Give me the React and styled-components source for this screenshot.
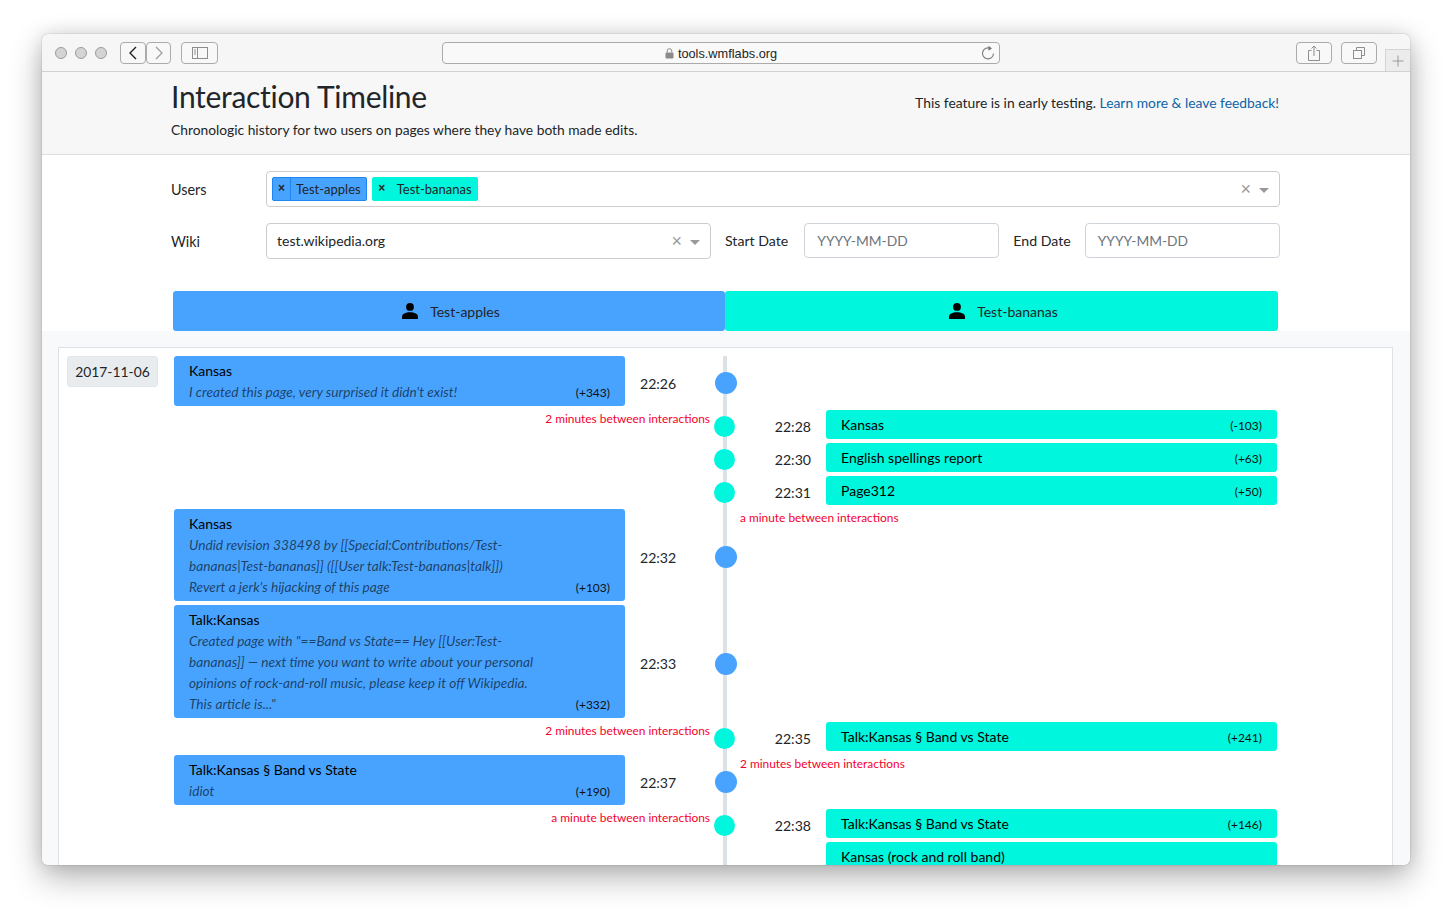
import React from 'react';
import styled, { createGlobalStyle } from 'styled-components';

const BLUE = '#48a3ff';
const TEAL = '#00f6dd';

const Global = createGlobalStyle`
  html, body { margin: 0; padding: 0; background: #fff; height: 100%; overflow: hidden; }
  body { font-family: Lato, "Open Sans", sans-serif; font-size: 14px; color: #212529; }
`;

const Stage = styled.div`
  padding: 34px 41px 0 42px;
  height: 915px;
  box-sizing: border-box;
`;
const Win = styled.div`
  width: 1368px;
  height: 831px;
  border-radius: 6px;
  overflow: hidden;
  background: #f8f9fa;
  box-shadow: 0 0 1px rgba(0,0,0,.55), 0 12px 32px rgba(0,0,0,.3), 0 0 18px rgba(0,0,0,.1);
  display: flex;
  flex-direction: column;
`;
const Toolbar = styled.div`
  height: 37px;
  flex: none;
  box-sizing: content-box;
  background: #f6f6f6;
  border-bottom: 1px solid #d1d1d1;
  display: flex;
  align-items: flex-start;
  padding-left: 13px;
`;
const Lights = styled.div`
  display: flex;
  gap: 8px;
  margin-top: 13px;
  margin-right: 13px;
`;
const Light = styled.span`
  width: 12px;
  height: 12px;
  box-sizing: border-box;
  border-radius: 50%;
  background: #d4d4d4;
  border: 1px solid #9c9c9c;
`;
const ToolBtn = styled.div`
  width: ${p => p.$w}px;
  height: 22px;
  box-sizing: border-box;
  border: 1px solid #ababab;
  border-radius: 4px;
  background: #f8f8f8;
  display: flex;
  align-items: center;
  justify-content: center;
  margin-top: 8px;
  margin-left: ${p => p.$ml || 0}px;
  flex: none;
`;
const UrlBar = styled.div`
  width: 558px;
  height: 22px;
  box-sizing: border-box;
  margin-top: 8px;
  margin-left: 224px;
  border: 1px solid #ababab;
  border-radius: 4px;
  background: #f9f9f9;
  display: flex;
  align-items: center;
  justify-content: center;
  gap: 4px;
  position: relative;
  flex: none;
  font-family: "Liberation Sans", Arial, sans-serif;
  font-size: 12.75px;
  color: #1f1f1f;
  padding-top: 1px;
`;
const Reload = styled.span`
  position: absolute;
  right: 3px;
  top: 2px;
  display: flex;
`;
const PlusTab = styled.div`
  width: 25px;
  height: 22px;
  margin-left: 8px;
  margin-top: 15px;
  box-sizing: border-box;
  background: #ececec;
  border-left: 1px solid #d4d4d4;
  border-top: 1px solid #d4d4d4;
  display: flex;
  align-items: center;
  justify-content: center;
  flex: none;
`;

const Header = styled.header`
  height: 82px;
  flex: none;
  background: #f7f7f7;
  border-bottom: 1px solid #dfdfdf;
  padding: 0 131px 0 129px;
  display: flex;
  justify-content: space-between;
`;
const Title = styled.h1`
  margin: 4px 0 0;
  font-size: 30px;
  letter-spacing: -0.3px;
  line-height: 40px;
  font-weight: 400;
  color: #212529;
`;
const Sub = styled.p`
  margin: 3px 0 0;
  font-size: 13.8px;
  line-height: 22px;
`;
const Notice = styled.div`
  margin-top: 20px;
  font-size: 13.85px;
  line-height: 22px;
`;
const Link = styled.a`
  color: #0e63a8;
`;

const Form = styled.section`
  background: #fff;
  flex: none;
  height: 176px;
  padding: 16px 130px 0 129px;
  box-sizing: border-box;
`;
const FormRow = styled.div`
  display: flex;
  align-items: flex-start;
  margin-bottom: 16px;
`;
const FieldLabel = styled.label`
  width: 95px;
  height: 36px;
  flex: none;
  font-size: 14.4px;
  line-height: 38px;
`;
const InlineLabel = styled.label`
  flex: none;
  font-size: 14.15px;
  line-height: 36px;
  margin-left: ${p => p.$ml}px;
  margin-right: ${p => p.$mr}px;
`;
const Select = styled.div`
  box-sizing: border-box;
  height: 36px;
  width: ${p => p.$w}px;
  flex: none;
  border: 1px solid #cccccc;
  border-radius: 4px;
  background: #fff;
  display: flex;
  align-items: center;
  padding-left: ${p => p.$pl}px;
`;
const Grow = styled.div`
  flex: 1;
  display: flex;
  align-items: center;
  gap: 5px;
  font-size: 14px;
  line-height: 20px;
  padding-bottom: ${p => (p.$lift ? 1 : 0)}px;
`;
const Clear = styled.span`
  color: #999;
  font-size: 18px;
  line-height: 1;
  margin-right: 8px;
  font-family: "Liberation Sans", Arial, sans-serif;
`;
const Caret = styled.span`
  width: 0;
  height: 0;
  border-left: 5px solid transparent;
  border-right: 5px solid transparent;
  border-top: 5px solid #999;
  margin-right: 10px;
  margin-top: 2px;
`;
const Tag = styled.div`
  display: flex;
  height: 24px;
  box-sizing: border-box;
  background: ${p => p.$bg};
  border: 1px solid ${p => p.$line};
  border-radius: 2px;
  font-size: 13px;
  line-height: 22px;
  color: #212529;
`;
const TagX = styled.span`
  width: ${p => p.$w}px;
  box-sizing: border-box;
  text-align: center;
  border-right: 1px solid ${p => p.$line};
  font-family: "Liberation Sans", Arial, sans-serif;
  font-size: 12px;
  font-weight: 700;
  line-height: 20px;
`;
const TagText = styled.span`
  padding: 0 5px;
`;
const DateInput = styled.div`
  box-sizing: border-box;
  width: ${p => p.$w}px;
  flex: none;
  height: 35px;
  border: 1px solid #ced4da;
  border-radius: 4px;
  padding-left: 12px;
  font-size: 13.8px;
  line-height: 33px;
  color: #6c757d;
`;
const Bars = styled.div`
  display: flex;
  margin: 32px 2px 0 2px;
`;
const UserBar = styled.div`
  height: 40px;
  width: ${p => p.$w}px;
  box-sizing: border-box;
  padding-left: 4px;
  background: ${p => p.$bg};
  border-radius: 3px;
  display: flex;
  align-items: center;
  justify-content: center;
  gap: 12px;
  font-size: 14px;
  color: #212529;
`;

const Main = styled.main`
  flex: 1;
  padding: 16px 17px 0 16px;
  min-height: 0;
  background: #f8f9fa;
`;
const Card = styled.div`
  box-sizing: border-box;
  height: 100%;
  min-height: 600px;
  background: #fff;
  border: 1px solid #dee2e6;
  border-bottom: none;
  display: flex;
  align-items: flex-start;
  padding: 8px 0 0 8px;
  overflow: hidden;
`;
const DateBadge = styled.div`
  box-sizing: border-box;
  width: 91px;
  height: 31px;
  flex: none;
  background: #e9ecef;
  border: 1px solid #e3e6ea;
  border-radius: 3px;
  text-align: center;
  font-size: 13.85px;
  line-height: 29px;
  margin-right: 16px;
`;
const Timeline = styled.div`
  position: relative;
  width: 1103px;
  flex: none;
  display: flex;
  flex-direction: column;
  gap: 4px;
  &::before {
    content: '';
    position: absolute;
    left: 549px;
    top: 0;
    bottom: 0;
    width: 4px;
    background: #dce1e6;
  }
`;
const Row = styled.div`
  position: relative;
  display: grid;
  grid-template-columns: 540px 23px 540px;
`;
const Side = styled.div`
  display: flex;
  align-items: center;
  gap: 15px;
  justify-content: ${p => (p.$right ? 'flex-end' : 'flex-start')};
`;
const Gap = styled.div`
  align-self: flex-start;
  width: 100%;
  box-sizing: border-box;
  font-size: 11.9px;
  line-height: 18px;
  color: #f5002d;
  text-align: ${p => (p.$right ? 'left' : 'right')};
  padding: ${p => (p.$right ? '0 0 0 3px' : '0 4px 0 0')};
`;
const Time = styled.div`
  width: ${p => (p.$right ? 'auto' : '60px')};
  font-size: 14.1px;
  line-height: 21px;
  padding-top: 4px;
  color: #212529;
`;
const DotCell = styled.div`
  display: flex;
  align-items: center;
  padding-top: 4px;
  box-sizing: border-box;
`;
const Dot = styled.span`
  display: block;
  flex: none;
  width: ${p => (p.$blue ? 22 : 21)}px;
  height: ${p => (p.$blue ? 22 : 21)}px;
  margin-left: ${p => (p.$blue ? 1 : 0)}px;
  border-radius: 50%;
  background: ${p => (p.$blue ? BLUE : TEAL)};
`;
const Entry = styled.div`
  width: 451px;
  box-sizing: border-box;
  flex: none;
  background: ${p => (p.$blue ? BLUE : TEAL)};
  border-radius: 3px;
  padding: 4px 15px;
  color: #000;
`;
const Line = styled.div`
  display: flex;
  justify-content: space-between;
  align-items: baseline;
  height: 21px;
  line-height: 21px;
  font-size: 14px;
  white-space: nowrap;
`;
const Summary = styled.span`
  font-style: italic;
  font-size: 13.7px;
  color: rgba(0,0,0,.62);
`;
const Delta = styled.span`
  font-size: 12px;
  line-height: 16px;
  color: #111;
`;

const Person = () => (
  <svg width="16" height="16" viewBox="0 0 16 16" fill="#000">
    <circle cx="8" cy="3.9" r="3.9" />
    <path d="M0 16v-2.2C0 11 3.6 9.3 8 9.3s8 1.7 8 4.5V16z" />
  </svg>
);

const Glyph = ({ children, w = 16, h = 16, c = '#8e8e8e' }) => (
  <svg width={w} height={h} viewBox={`0 0 ${w} ${h}`} fill="none" stroke={c} strokeWidth="1">
    {children}
  </svg>
);

const rows = [
  { side: 'l', time: '22:26', name: 'Kansas', summary: ["I created this page, very surprised it didn't exist!"], delta: '(+343)' },
  { side: 'r', time: '22:28', name: 'Kansas', delta: '(-103)', gap: '2 minutes between interactions' },
  { side: 'r', time: '22:30', name: 'English spellings report', delta: '(+63)' },
  { side: 'r', time: '22:31', name: 'Page312', delta: '(+50)' },
  { side: 'l', time: '22:32', name: 'Kansas', gap: 'a minute between interactions', delta: '(+103)', summary: [
    'Undid revision 338498 by [[Special:Contributions/Test-',
    'bananas|Test-bananas]] ([[User talk:Test-bananas|talk]])',
    "Revert a jerk's hijacking of this page",
  ] },
  { side: 'l', time: '22:33', name: 'Talk:Kansas', delta: '(+332)', summary: [
    'Created page with "==Band vs State== Hey [[User:Test-',
    'bananas]] \u2014 next time you want to write about your personal',
    'opinions of rock-and-roll music, please keep it off Wikipedia.',
    'This article is..."',
  ] },
  { side: 'r', time: '22:35', name: 'Talk:Kansas \u00a7 Band vs State', delta: '(+241)', gap: '2 minutes between interactions' },
  { side: 'l', time: '22:37', name: 'Talk:Kansas \u00a7 Band vs State', delta: '(+190)', summary: ['idiot'], gap: '2 minutes between interactions' },
  { side: 'r', time: '22:38', name: 'Talk:Kansas \u00a7 Band vs State', delta: '(+146)', gap: 'a minute between interactions' },
  { side: 'r', time: '', name: 'Kansas (rock and roll band)', delta: '', noDot: true },
];

const EntryCard = ({ r }) => {
  const blue = r.side === 'l';
  const sum = r.summary || [];
  return (
    <Entry $blue={blue}>
      <Line>
        <span>{r.name}</span>
        {sum.length === 0 && <Delta>{r.delta}</Delta>}
      </Line>
      {sum.map((s, i) => (
        <Line key={i}>
          <Summary>{s}</Summary>
          {i === sum.length - 1 && <Delta>{r.delta}</Delta>}
        </Line>
      ))}
    </Entry>
  );
};

const TimelineRow = ({ r }) => {
  const blue = r.side === 'l';
  return (
    <Row>
      <Side>
        {blue ? (
          <>
            <EntryCard r={r} />
            <Time>{r.time}</Time>
          </>
        ) : r.gap ? <Gap>{r.gap}</Gap> : null}
      </Side>
      <DotCell>{!r.noDot && <Dot $blue={blue} />}</DotCell>
      <Side $right={!blue}>
        {blue ? (r.gap ? <Gap $right>{r.gap}</Gap> : null) : (
          <>
            <Time $right>{r.time}</Time>
            <EntryCard r={r} />
          </>
        )}
      </Side>
    </Row>
  );
};

export default function App() {
  return (
    <Stage>
      <Global />
      <Win>
        <Toolbar>
          <Lights>
            <Light />
            <Light />
            <Light />
          </Lights>
          <ToolBtn $w={26}>
            <Glyph c="#222"><path d="M11 2 5 8l6 6" strokeWidth="1.4" /></Glyph>
          </ToolBtn>
          <ToolBtn $w={25}>
            <Glyph c="#9a9a9a"><path d="M5 2l6 6-6 6" strokeWidth="1.2" /></Glyph>
          </ToolBtn>
          <ToolBtn $w={37} $ml={10}>
            <Glyph><rect x="0.5" y="2.5" width="15" height="11" /><path d="M5.5 2.5v11M2 5h2M2 7h2M2 9h2" /></Glyph>
          </ToolBtn>
          <UrlBar>
            <svg width="9" height="11" viewBox="0 0 9 11"><rect x="0.5" y="4.5" width="8" height="6" rx="1" fill="#8a8a8a" /><path d="M2.2 4.5V3a2.3 2.3 0 0 1 4.6 0v1.5" fill="none" stroke="#8a8a8a" /></svg>
            tools.wmflabs.org
            <Reload>
              <svg width="16" height="16" viewBox="0 0 16 16" fill="none" stroke="#777" strokeWidth="1.1">
                <path d="M10.4 3.4A5.5 5.5 0 1 0 13.5 8.5" />
                <path d="M8.5 0.8 12 3.4 8.5 5.8z" fill="#777" stroke="none" />
              </svg>
            </Reload>
          </UrlBar>
          <ToolBtn $w={36} $ml={296}>
            <Glyph><path d="M5.5 5.5H2.5v10h11v-10h-3M8 11V1M5.5 3.5 8 1l2.5 2.5" /></Glyph>
          </ToolBtn>
          <ToolBtn $w={36} $ml={9}>
            <Glyph><rect x="2.5" y="5.5" width="8" height="8" /><path d="M5.5 5.5v-3h8v8h-3" /></Glyph>
          </ToolBtn>
          <PlusTab>
            <svg width="12" height="12" viewBox="0 0 12 12" stroke="#9a9a9a" strokeWidth="1"><path d="M6 0.5v11M0.5 6h11" /></svg>
          </PlusTab>
        </Toolbar>

        <Header>
          <div>
            <Title>Interaction Timeline</Title>
            <Sub>Chronologic history for two users on pages where they have both made edits.</Sub>
          </div>
          <Notice>
            This feature is in early testing. <Link>Learn more &amp; leave feedback!</Link>
          </Notice>
        </Header>

        <Form>
          <FormRow>
            <FieldLabel>Users</FieldLabel>
            <Select $w={1014} $pl={5}>
              <Grow>
                <Tag $bg={BLUE} $line="#1c86f2">
                  <TagX $w={18} $line="#1c86f2">×</TagX>
                  <TagText>Test-apples</TagText>
                </Tag>
                <Tag $bg={TEAL} $line={TEAL}>
                  <TagX $w={19} $line={TEAL}>×</TagX>
                  <TagText>Test-bananas</TagText>
                </Tag>
              </Grow>
              <Clear>×</Clear>
              <Caret />
            </Select>
          </FormRow>
          <FormRow>
            <FieldLabel>Wiki</FieldLabel>
            <Select $w={445} $pl={10}>
              <Grow $lift>test.wikipedia.org</Grow>
              <Clear>×</Clear>
              <Caret />
            </Select>
            <InlineLabel $ml={14} $mr={16}>Start Date</InlineLabel>
            <DateInput $w={195}>YYYY-MM-DD</DateInput>
            <InlineLabel $ml={14} $mr={14}>End Date</InlineLabel>
            <DateInput $w={195}>YYYY-MM-DD</DateInput>
          </FormRow>
          <Bars>
            <UserBar $w={552} $bg={BLUE}><Person />Test-apples</UserBar>
            <UserBar $w={553} $bg={TEAL}><Person />Test-bananas</UserBar>
          </Bars>
        </Form>

        <Main>
          <Card>
            <DateBadge>2017-11-06</DateBadge>
            <Timeline>
              {rows.map((r, i) => <TimelineRow key={i} r={r} />)}
            </Timeline>
          </Card>
        </Main>
      </Win>
    </Stage>
  );
}
